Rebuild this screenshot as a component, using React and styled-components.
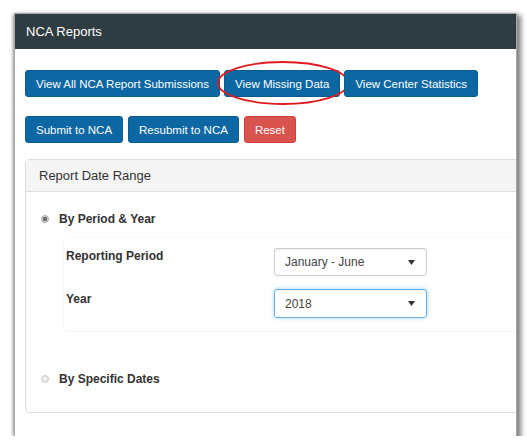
import React from 'react'
import styled, { createGlobalStyle } from 'styled-components'

const GlobalStyle = createGlobalStyle`
  body {
    margin: 0;
    background: #fff;
    font-family: "Liberation Sans", Arial, sans-serif;
  }
`

const Page = styled.div`
  padding: 14px 11px 0 15px;
`

const Frame = styled.div`
  width: 501px;
  height: 422px;
  overflow: hidden;
  background: #fff;
  box-shadow: 0 0 0 1px #a8a8a8, 3px 3px 5px 2px rgba(0, 0, 0, 0.5), -2px 0 3px 0 rgba(0, 0, 0, 0.35);
`

const Header = styled.div`
  height: 35px;
  display: flex;
  align-items: center;
  padding: 0 11px;
  background: #2f3c41;
  color: #fff;
  font-size: 13px;
`

const Body = styled.div`
  padding: 21px 0 0 10px;
`

const ButtonRow = styled.div`
  display: flex;
  gap: ${props => props.gap || 5}px;
  margin-top: ${props => props.top || 0}px;
`

const Button = styled.div`
  position: relative;
  height: 27px;
  display: flex;
  align-items: center;
  padding: 0 10px;
  border-radius: 3px;
  background: ${props => props.danger ? '#d9534f' : '#0c67a3'};
  border: 1px solid ${props => props.danger ? '#d43f3a' : '#0a5d94'};
  box-sizing: border-box;
  color: #fff;
  font-size: 11.5px;
  white-space: nowrap;
`

const Circled = styled.svg`
  position: absolute;
  left: -8px;
  top: -10px;
  width: 132px;
  height: 44px;
  overflow: visible;
  pointer-events: none;
`

const Panel = styled.div`
  margin-top: 16px;
  width: 540px;
  border: 1px solid #ddd;
  border-radius: 4px;
`

const PanelHeading = styled.div`
  height: 31px;
  display: flex;
  align-items: center;
  padding-left: 13px;
  background: #f5f5f5;
  border-bottom: 1px solid #ddd;
  color: #333;
  font-size: 13px;
`

const PanelBody = styled.div`
  padding: 19px 0 25px 15px;
`

const RadioOption = styled.div`
  display: flex;
  align-items: center;
  gap: 10px;
  height: 16px;
  margin-top: ${props => props.top || 0}px;
  color: #333;
  font-size: 12px;
  font-weight: bold;
`

const Radio = styled.span`
  width: 8px;
  height: 8px;
  border-radius: 50%;
  box-sizing: border-box;
  border: 1px solid ${props => props.checked ? '#a9a9a9' : '#c8c8c8'};
  background: ${props => props.checked
    ? 'radial-gradient(circle, #6f6f6f 0 2px, #d4d4d4 2.5px)'
    : 'radial-gradient(circle, #f4f4f4 0 1px, #dcdcdc 4px)'};
`

const Well = styled.div`
  margin: 10px 0 0 22px;
  padding: 10px 0 13px 2px;
  border: 1px solid #f5f5f5;
  border-top-color: #fafafa;
  border-right: none;
  border-radius: 4px;
  display: flex;
  flex-direction: column;
  gap: 13px;
`

const FormRow = styled.div`
  display: grid;
  grid-template-columns: 208px 153px;
  align-items: start;
`

const Label = styled.div`
  padding-top: ${props => props.pad || 1}px;
  color: #333;
  font-size: 12px;
  font-weight: bold;
`

const Select = styled.div`
  height: ${props => props.focused ? 29 : 28}px;
  box-sizing: border-box;
  display: flex;
  align-items: center;
  justify-content: space-between;
  padding: 0 11px 0 10px;
  border: 1px solid ${props => props.focused ? '#66afe9' : '#ccc'};
  border-radius: 3px;
  box-shadow: ${props => props.focused
    ? 'inset 0 1px 1px rgba(0,0,0,.075), 0 0 4px rgba(102,175,233,.6)'
    : 'inset 0 1px 1px rgba(0,0,0,.075)'};
  color: #444;
  font-size: 12px;
`

const Caret = styled.svg`
  width: 7px;
  height: 5px;
`

function Arrow() {
  return (
    <Caret viewBox="0 0 7 5">
      <path d="M0 0 H7 L3.5 5 Z" fill="#333" />
    </Caret>
  )
}

export default function App() {
  return (
    <>
      <GlobalStyle />
      <Page>
        <Frame>
          <Header>NCA Reports</Header>
          <Body>
            <ButtonRow gap={4}>
              <Button>View All NCA Report Submissions</Button>
              <Button>
                View Missing Data
                <Circled viewBox="0 0 132 44">
                  <ellipse cx="66" cy="22" rx="65" ry="21" fill="none" stroke="#e01b22" strokeWidth="1.8" />
                </Circled>
              </Button>
              <Button>View Center Statistics</Button>
            </ButtonRow>
            <ButtonRow top={19}>
              <Button>Submit to NCA</Button>
              <Button>Resubmit to NCA</Button>
              <Button danger>Reset</Button>
            </ButtonRow>
            <Panel>
              <PanelHeading>Report Date Range</PanelHeading>
              <PanelBody>
                <RadioOption>
                  <Radio checked />
                  By Period &amp; Year
                </RadioOption>
                <Well>
                  <FormRow>
                    <Label>Reporting Period</Label>
                    <Select>
                      January - June
                      <Arrow />
                    </Select>
                  </FormRow>
                  <FormRow>
                    <Label pad={3}>Year</Label>
                    <Select focused>
                      2018
                      <Arrow />
                    </Select>
                  </FormRow>
                </Well>
                <RadioOption top={39}>
                  <Radio />
                  By Specific Dates
                </RadioOption>
              </PanelBody>
            </Panel>
          </Body>
        </Frame>
      </Page>
    </>
  )
}
